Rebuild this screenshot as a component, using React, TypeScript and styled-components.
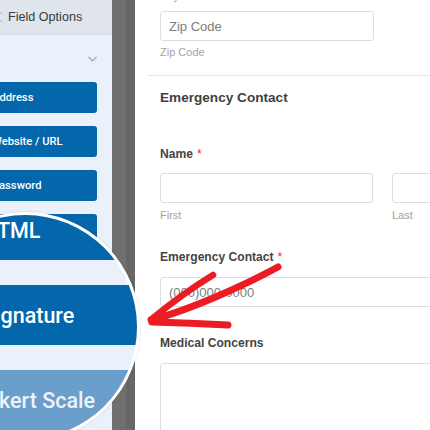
import React from "react";
import styled, { createGlobalStyle } from "styled-components";

const Global = createGlobalStyle`
  html, body { margin: 0; padding: 0; background: #fff; overflow: hidden; }
  body { font-family: "Liberation Sans", Arial, Helvetica, sans-serif; }
  * { box-sizing: border-box; }
`;

const Page = styled.div`
  position: relative;
  width: 430px;
  height: 430px;
  overflow: hidden;
  display: flex;
`;

const Sidebar = styled.aside`
  width: 112px;
  flex: none;
  background: #eaf1fa;
  display: flex;
  flex-direction: column;
  overflow: hidden;
`;

const TabBar = styled.div`
  height: 35px;
  flex: none;
  background: #dfe5eb;
  border-bottom: 1px solid #d4dbe2;
  display: flex;
  align-items: center;
`;

const Tab = styled.div`
  position: relative;
  padding-left: 8px;
  font-size: 12.6px;
  color: #363c42;
  white-space: nowrap;
  &::before {
    content: "";
    position: absolute;
    left: 0;
    top: 50%;
    transform: translateY(-50%);
    width: 2px;
    height: 7px;
    border-top: 1px solid #a8b0b8;
    border-bottom: 1px solid #a8b0b8;
  }
`;

const SectionHead = styled.div`
  height: 47px;
  flex: none;
  display: flex;
  align-items: center;
  justify-content: flex-end;
  padding-right: 15px;
`;

const FieldList = styled.div`
  display: flex;
  flex-direction: column;
  gap: 13px;
  margin-left: -40px;
  margin-right: 15px;
`;

const FieldButton = styled.div`
  height: 31px;
  flex: none;
  border-radius: 3px;
  background: #0567ab;
  color: #fff;
  font-family: Roboto, "Liberation Sans", Arial, sans-serif;
  font-weight: 500;
  font-size: 11.2px;
  padding-left: 32px;
  display: flex;
  align-items: center;
  white-space: nowrap;
`;

const Scrollbar = styled.div`
  width: 23px;
  flex: none;
  background: #707070;
  border-right: 9px solid #676767;
`;

const Canvas = styled.main`
  flex: 1;
  min-width: 0;
  background: #fff;
  padding-left: 13px;
  overflow: hidden;
`;

const Form = styled.div`
  width: 480px;
  margin-top: -10px;
  padding-left: 12px;
  display: flex;
  flex-direction: column;
`;

const Columns = styled.div<{ $gap?: number }>`
  display: grid;
  grid-template-columns: 213px 1fr;
  column-gap: 19px;
  margin-top: ${(p) => p.$gap ?? 0}px;
`;

const Sublabel = styled.div<{ $gap?: number }>`
  font-size: 11px;
  line-height: 13px;
  color: #a3a3a3;
  margin-top: ${(p) => p.$gap ?? 0}px;
`;

const Input = styled.div<{ $gap?: number; $width?: string }>`
  height: 30px;
  width: ${(p) => p.$width ?? "100%"};
  margin-top: ${(p) => p.$gap ?? 0}px;
  border: 1px solid #dedede;
  border-radius: 3px;
  padding: 0 8px;
  display: flex;
  align-items: center;
  font-size: 13px;
  color: #7d7d7d;
  background: #fff;
`;

const TextArea = styled.div<{ $gap?: number }>`
  height: 120px;
  margin-top: ${(p) => p.$gap ?? 0}px;
  border: 1px solid #dedede;
  border-radius: 3px;
`;

const Divider = styled.div<{ $gap?: number }>`
  height: 1px;
  background: #e4e4e4;
  margin-left: -12px;
  margin-top: ${(p) => p.$gap ?? 0}px;
`;

const Heading = styled.div<{ $gap?: number }>`
  font-size: 13.6px;
  line-height: 16px;
  font-weight: 700;
  color: #3f3f3f;
  margin-top: ${(p) => p.$gap ?? 0}px;
`;

const Label = styled.div<{ $gap?: number }>`
  font-size: 12.1px;
  line-height: 15px;
  font-weight: 700;
  color: #444;
  margin-top: ${(p) => p.$gap ?? 0}px;
`;

const Required = styled.span`
  color: #d63638;
  font-weight: 400;
  margin-left: 4px;
`;

const Magnifier = styled.div`
  position: absolute;
  left: -90px;
  top: 212px;
  width: 230px;
  height: 230px;
  border-radius: 50%;
  border: 3px solid #fff;
  background: #eaf1fa;
  overflow: hidden;
  box-shadow: 0 0 3px rgba(0, 0, 0, 0.12);
`;

const MagList = styled.div`
  display: flex;
  flex-direction: column;
  gap: 25px;
  margin-top: -15px;
  margin-left: 6px;
`;

const MagButton = styled.div<{ $faded?: boolean }>`
  width: 300px;
  height: 60px;
  flex: none;
  border-radius: 6px;
  background: ${(p) => (p.$faded ? "#6b9fcb" : "#0567ab")};
  color: ${(p) => (p.$faded ? "rgba(255,255,255,0.88)" : "#fff")};
  font-family: Roboto, "Liberation Sans", Arial, sans-serif;
  font-weight: 500;
  font-size: 21.5px;
  padding-left: 63px;
  display: flex;
  align-items: center;
  white-space: nowrap;
`;

const Arrow = styled.svg`
  position: absolute;
  left: 140px;
  top: 260px;
  width: 150px;
  height: 75px;
  overflow: visible;
`;

const fields = ["Address", "Website / URL", "Password", "HTML", "Signature", "Likert Scale"];

export default function App() {
  return (
    <>
      <Global />
      <Page>
        <Sidebar>
          <TabBar>
            <Tab>Field Options</Tab>
          </TabBar>
          <SectionHead>
            <svg width="9" height="6" viewBox="0 0 9 6">
              <polyline points="0.5,0.8 4.5,4.8 8.5,0.8" fill="none" stroke="#9aa1a8" strokeWidth="1.2" />
            </svg>
          </SectionHead>
          <FieldList>
            {fields.map((f) => (
              <FieldButton key={f}>{f}</FieldButton>
            ))}
          </FieldList>
        </Sidebar>
        <Scrollbar />
        <Canvas>
          <Form>
            <Columns>
              <Sublabel>City</Sublabel>
              <Sublabel>State</Sublabel>
            </Columns>
            <Input $gap={8} $width="214px">Zip Code</Input>
            <Sublabel $gap={5}>Zip Code</Sublabel>
            <Divider $gap={16} />
            <Heading $gap={14}>Emergency Contact</Heading>
            <Label $gap={41}>
              Name<Required>*</Required>
            </Label>
            <Columns $gap={11}>
              <Input />
              <Input />
            </Columns>
            <Columns $gap={6}>
              <Sublabel>First</Sublabel>
              <Sublabel>Last</Sublabel>
            </Columns>
            <Label $gap={28}>
              Emergency Contact<Required>*</Required>
            </Label>
            <Input $gap={12}>(000)000-0000</Input>
            <Label $gap={29}>Medical Concerns</Label>
            <TextArea $gap={12} />
          </Form>
        </Canvas>
        <Magnifier>
          <MagList>
            <MagButton>HTML</MagButton>
            <MagButton>Signature</MagButton>
            <MagButton $faded>Likert Scale</MagButton>
          </MagList>
        </Magnifier>
        <Arrow viewBox="0 0 150 75">
          <g fill="none" stroke="#ec1c24" strokeLinecap="round" strokeLinejoin="round">
            <path d="M138 7 C 105 25, 50 50, 11 60" strokeWidth="7" />
            <path d="M73 15 Q 42 34 13 58" strokeWidth="6.5" />
            <path d="M12 62 Q 50 63 88 65" strokeWidth="7" />
          </g>
        </Arrow>
      </Page>
    </>
  );
}
